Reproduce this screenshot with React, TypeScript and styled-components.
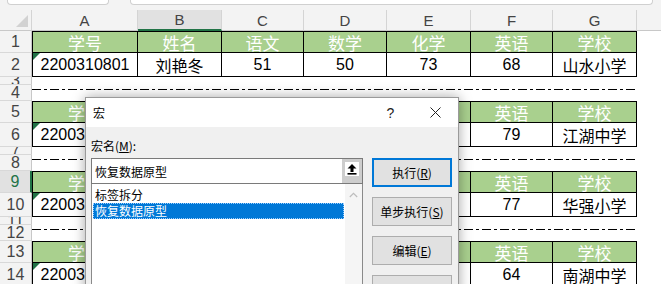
import React from "react";
import styled, { createGlobalStyle, css } from "styled-components";

const GlobalStyle = createGlobalStyle`
  html, body {
    margin: 0;
    padding: 0;
    background: #ffffff;
    overflow: hidden;
  }
  body {
    font-family: "Liberation Sans", "Noto Sans CJK SC", sans-serif;
  }
`;

const COLS = [106, 84, 82, 83, 84, 82, 84];
const LETTERS = ["A", "B", "C", "D", "E", "F", "G"];
const TEMPLATE = `32px ${COLS.map((c) => `${c}px`).join(" ")} 1fr`;
const GREEN = "#217346";

const Page = styled.div`
  position: relative;
  width: 661px;
  height: 284px;
  overflow: hidden;
`;

const TopBar = styled.div`
  height: 10px;
  background: #f3f3f3;
  display: flex;
  gap: 21px;
  padding-left: 7px;
  padding-right: 8px;
`;

const BarBox = styled.div<{ $w?: number }>`
  ${(p) => (p.$w ? `width: ${p.$w}px;` : "flex: 1;")}
  height: 4px;
  background: #fff;
  border: 1px solid #d0d0d0;
  border-top: none;
  border-radius: 0 0 4px 4px;
`;

const Row = styled.div<{ $h: number }>`
  display: grid;
  grid-template-columns: ${TEMPLATE};
  height: ${(p) => p.$h}px;
`;

const Corner = styled.div`
  position: relative;
  background: #f3f3f3;
  border-right: 1px solid #d4d4d4;
  border-bottom: 1px solid #c8c8c8;
  &::after {
    content: "";
    position: absolute;
    right: 3px;
    bottom: 3px;
    border-left: 12px solid transparent;
    border-bottom: 12px solid #d2d2d2;
  }
`;

const ColHead = styled.div<{ $active?: boolean }>`
  box-sizing: border-box;
  display: flex;
  align-items: center;
  justify-content: center;
  font-size: 15px;
  color: #444;
  background: ${(p) => (p.$active ? "#e1e1e1" : "#f3f3f3")};
  border-right: 1px solid #d4d4d4;
  border-bottom: ${(p) => (p.$active ? `2px solid ${GREEN}` : "1px solid #c8c8c8")};
`;

const ColFill = styled.div`
  background: #f3f3f3;
  border-bottom: 1px solid #c8c8c8;
`;

const RowHead = styled.div<{ $active?: boolean }>`
  box-sizing: border-box;
  display: flex;
  align-items: center;
  justify-content: center;
  overflow: hidden;
  font-size: 16px;
  line-height: 18px;
  color: ${(p) => (p.$active ? GREEN : "#444")};
  background: ${(p) => (p.$active ? "#e1e1e1" : "#f3f3f3")};
  border-bottom: 1px solid #d8d8d8;
  border-right: ${(p) => (p.$active ? `2px solid ${GREEN}` : "1px solid #c8c8c8")};
`;

const Cell = styled.div<{ $head?: boolean; $first?: boolean; $flag?: boolean }>`
  position: relative;
  box-sizing: border-box;
  display: flex;
  align-items: center;
  justify-content: center;
  white-space: nowrap;
  overflow: hidden;
  font-size: 16px;
  color: #000;
  background: #fff;
  border-right: 1px solid #000;
  border-bottom: 1px solid #000;
  ${(p) => p.$first && "border-left: 1px solid #000;"}
  ${(p) =>
    p.$head &&
    css`
      background: #a9d08e;
      color: #fff;
      font-size: 17px;
      border-top: 1px solid #000;
    `}
  ${(p) =>
    p.$flag &&
    css`
      &::before {
        content: "";
        position: absolute;
        left: 0;
        top: 0;
        border-top: 7px solid ${GREEN};
        border-right: 7px solid transparent;
      }
    `}
`;

const Blank = styled.div``;

const BreakLine = styled.div`
  grid-column: 2 / 9;
  margin-top: 4px;
  height: 1px;
  background: repeating-linear-gradient(
    to right,
    #000 0 9px,
    transparent 9px 12px,
    #000 12px 15px,
    transparent 15px 18px
  );
`;

/* ---------- dialog ---------- */

const Dialog = styled.div`
  position: absolute;
  left: 85px;
  top: 97px;
  width: 374px;
  height: 210px;
  box-sizing: border-box;
  background: #f0f0f0;
  border: 1px solid #9a9a9a;
  box-shadow: 0 0 12px rgba(0, 0, 0, 0.35);
  font-family: "Noto Sans CJK SC", "Liberation Sans", sans-serif;
  font-size: 12px;
  color: #000;
`;

const TitleBar = styled.div`
  height: 29px;
  background: #fff;
  display: flex;
  align-items: center;
  padding-left: 7px;
`;

const Title = styled.div`
  flex: 1;
`;

const TitleBtn = styled.div`
  width: 45px;
  height: 29px;
  display: flex;
  align-items: center;
  justify-content: center;
  font-family: "Liberation Sans", sans-serif;
  font-size: 14px;
  color: #222;
`;

const Body = styled.div`
  display: grid;
  grid-template-columns: 272px 80px;
  column-gap: 9px;
  padding: 11px 0 0 5px;
`;

const Label = styled.div`
  grid-column: 1 / 3;
  height: 16px;
  line-height: 16px;
  margin-bottom: 4px;
`;

const Key = styled.span`
  text-decoration: underline;
`;

const LeftCol = styled.div`
  display: flex;
  flex-direction: column;
`;

const Input = styled.div`
  height: 26px;
  box-sizing: border-box;
  border: 1px solid #7a7a7a;
  background: #fff;
  display: flex;
  align-items: center;
  padding-left: 3px;
`;

const InputText = styled.div`
  flex: 1;
`;

const UpBtn = styled.div`
  width: 20px;
  height: 24px;
  background: #cdcdcd;
  display: flex;
  justify-content: center;
  padding-top: 3px;
  box-sizing: border-box;
`;

const UpFace = styled.div`
  width: 14px;
  height: 14px;
  background: #fff;
  display: flex;
  align-items: center;
  justify-content: center;
`;

const List = styled.div`
  height: 110px;
  box-sizing: border-box;
  border: 1px solid #8a8a8a;
  border-top: none;
  background: #fff;
  display: flex;
`;

const Items = styled.div`
  flex: 1;
  padding: 3px 1px 0 1px;
`;

const Item = styled.div<{ $sel?: boolean }>`
  height: 16px;
  line-height: 14px;
  box-sizing: border-box;
  padding-left: 1px;
  border: 1px solid transparent;
  ${(p) =>
    p.$sel &&
    css`
      background: #0078d7;
      color: #fff;
      border: 1px dotted #9fd0ff;
    `}
`;

const ScrollBar = styled.div`
  width: 17px;
  background: #f5f5f5;
  display: flex;
  justify-content: center;
  padding-top: 8px;
  box-sizing: border-box;
`;

const Buttons = styled.div`
  display: flex;
  flex-direction: column;
  gap: 10px;
`;

const Button = styled.div<{ $primary?: boolean }>`
  height: 29px;
  box-sizing: border-box;
  background: #e1e1e1;
  border: ${(p) => (p.$primary ? "2px solid #0078d7" : "1px solid #adadad")};
  display: flex;
  align-items: center;
  justify-content: center;
`;

/* ---------- data ---------- */

const HEADERS = ["学号", "姓名", "语文", "数学", "化学", "英语", "学校"];
const RECORDS = [
  ["2200310801", "刘艳冬", "51", "50", "73", "68", "山水小学"],
  ["2200310802", "王海燕", "66", "71", "58", "79", "江湖中学"],
  ["2200310803", "张志强", "82", "64", "69", "77", "华强小学"],
  ["2200310804", "李晓明", "75", "88", "61", "64", "南湖中学"],
];

const ACTIVE_ROW = 9;

const HeaderRow = ({ n }: { n: number }) => (
  <Row $h={22}>
    <RowHead $active={n === ACTIVE_ROW}>{n}</RowHead>
    {HEADERS.map((h, i) => (
      <Cell key={h} $head $first={i === 0}>
        {h}
      </Cell>
    ))}
    <Blank />
  </Row>
);

const DataRow = ({ n, data }: { n: number; data: string[] }) => (
  <Row $h={24}>
    <RowHead $active={n === ACTIVE_ROW}>{n}</RowHead>
    {data.map((d, i) => (
      <Cell key={i} $first={i === 0} $flag={i === 0}>
        {d}
      </Cell>
    ))}
    <Blank />
  </Row>
);

const GapRows = ({ n }: { n: number }) => (
  <>
    <Row $h={8}>
      <RowHead>{n}</RowHead>
    </Row>
    <Row $h={16}>
      <RowHead>{n + 1}</RowHead>
      <BreakLine />
    </Row>
  </>
);

const UpArrow = () => (
  <svg width="10" height="11" viewBox="0 0 10 11">
    <path d="M5 0 L9.5 4.5 H6.5 V8 H3.5 V4.5 H0.5 Z" fill="#000" />
    <rect x="0.5" y="9" width="9" height="1.6" fill="#000" />
  </svg>
);

const Chevron = () => (
  <svg width="9" height="6" viewBox="0 0 9 6">
    <path d="M0.8 5 L4.5 1.3 L8.2 5" fill="none" stroke="#bdbdbd" strokeWidth="1.2" />
  </svg>
);

const CloseIcon = () => (
  <svg width="11" height="11" viewBox="0 0 11 11">
    <path d="M0.5 0.5 L10.5 10.5 M10.5 0.5 L0.5 10.5" stroke="#222" strokeWidth="1" />
  </svg>
);

export default function App() {
  return (
    <>
      <GlobalStyle />
      <Page>
        <TopBar>
          <BarBox $w={100} />
          <BarBox />
        </TopBar>
        <Row $h={21}>
          <Corner />
          {LETTERS.map((l) => (
            <ColHead key={l} $active={l === "B"}>
              {l}
            </ColHead>
          ))}
          <ColFill />
        </Row>
        {RECORDS.map((r, i) => (
          <React.Fragment key={i}>
            <HeaderRow n={i * 4 + 1} />
            <DataRow n={i * 4 + 2} data={r} />
            {i < RECORDS.length - 1 && <GapRows n={i * 4 + 3} />}
          </React.Fragment>
        ))}

        <Dialog>
          <TitleBar>
            <Title>宏</Title>
            <TitleBtn>?</TitleBtn>
            <TitleBtn>
              <CloseIcon />
            </TitleBtn>
          </TitleBar>
          <Body>
            <Label>
              宏名(<Key>M</Key>):
            </Label>
            <LeftCol>
              <Input>
                <InputText>恢复数据原型</InputText>
                <UpBtn>
                  <UpFace>
                    <UpArrow />
                  </UpFace>
                </UpBtn>
              </Input>
              <List>
                <Items>
                  <Item>标签拆分</Item>
                  <Item $sel>恢复数据原型</Item>
                </Items>
                <ScrollBar>
                  <Chevron />
                </ScrollBar>
              </List>
            </LeftCol>
            <Buttons>
              <Button $primary>
                执行(<Key>R</Key>)
              </Button>
              <Button>
                单步执行(<Key>S</Key>)
              </Button>
              <Button>
                编辑(<Key>E</Key>)
              </Button>
              <Button>创建(C)</Button>
            </Buttons>
          </Body>
        </Dialog>
      </Page>
    </>
  );
}
